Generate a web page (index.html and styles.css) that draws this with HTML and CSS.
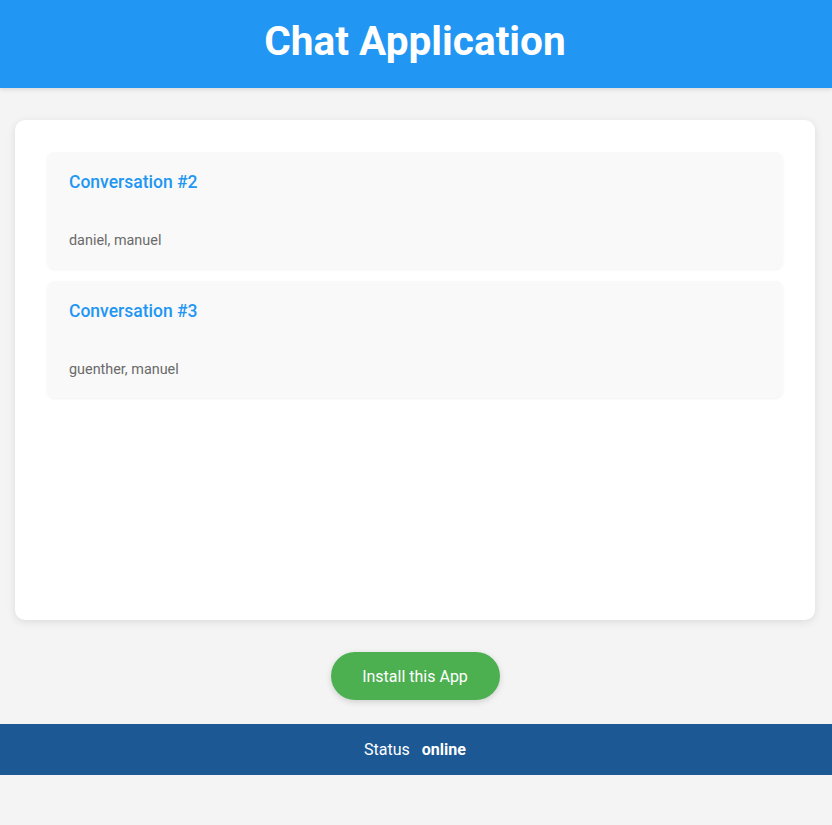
FILE: index.html
```html
<!DOCTYPE html>
<html lang="en">
<head>
<meta charset="utf-8">
<title>Chat Application</title>
<link rel="stylesheet" href="styles.css">
</head>
<body>
<header class="app-header">
  <h1>Chat Application</h1>
</header>
<main class="main">
  <section class="card">
    <div class="conv">
      <h3 class="conv-title">Conversation #2</h3>
      <p class="conv-people">daniel, manuel</p>
    </div>
    <div class="conv">
      <h3 class="conv-title">Conversation #3</h3>
      <p class="conv-people">guenther, manuel</p>
    </div>
  </section>
  <div class="install-row">
    <button class="install-btn">Install this App</button>
  </div>
</main>
<footer class="status-bar">
  <span>Status</span><strong class="status-value">online</strong>
</footer>
</body>
</html>
```

FILE: styles.css
```css
* { box-sizing: border-box; }
html, body { margin: 0; padding: 0; }
body {
  background: #f4f4f4;
  font-family: Roboto, "Noto Sans", Arial, sans-serif;
  color: #333;
}
.app-header {
  background: #2196f3;
  height: 88px;
  display: flex;
  align-items: center;
  justify-content: center;
  padding: 0 2px 6px 0;
  box-shadow: 0 2px 4px rgba(0,0,0,0.1);
}
.app-header h1 {
  margin: 0;
  color: #fff;
  font-size: 40.6px;
  font-weight: 700;
}
.main {
  padding: 32px 17px 24px 15px;
}
.card {
  background: #fff;
  border-radius: 10px;
  box-shadow: 0 2px 8px rgba(0,0,0,0.1);
  height: 500px;
  padding: 32px;
  display: flex;
  flex-direction: column;
  gap: 12px;
}
.conv {
  background: #f9f9f9;
  border-radius: 8px;
  box-shadow: 0 1px 3px rgba(0,0,0,0.05);
  padding: 20px 22px;
  height: 117px;
}
.conv-title {
  margin: 0;
  color: #2196f3;
  font-size: 17.5px;
  font-weight: 500;
  line-height: 21px;
}
.conv-people {
  margin: 40px 0 0;
  color: #6a6a6a;
  font-size: 14.4px;
  line-height: 16px;
}
.install-row {
  display: flex;
  justify-content: center;
  margin-top: 32px;
}
.install-btn {
  background: #4caf50;
  color: #fff;
  border: none;
  border-radius: 24px;
  width: 169px;
  height: 48px;
  font-family: Roboto, Arial, sans-serif;
  font-size: 16px;
  box-shadow: 0 2px 6px rgba(0,0,0,0.15);
  cursor: pointer;
}
.status-bar {
  background: #1b5894;
  color: #fff;
  height: 51px;
  display: flex;
  align-items: center;
  justify-content: center;
  padding-right: 2px;
  font-size: 16px;
}
.status-value {
  margin-left: 12px;
  font-weight: 700;
}
```
